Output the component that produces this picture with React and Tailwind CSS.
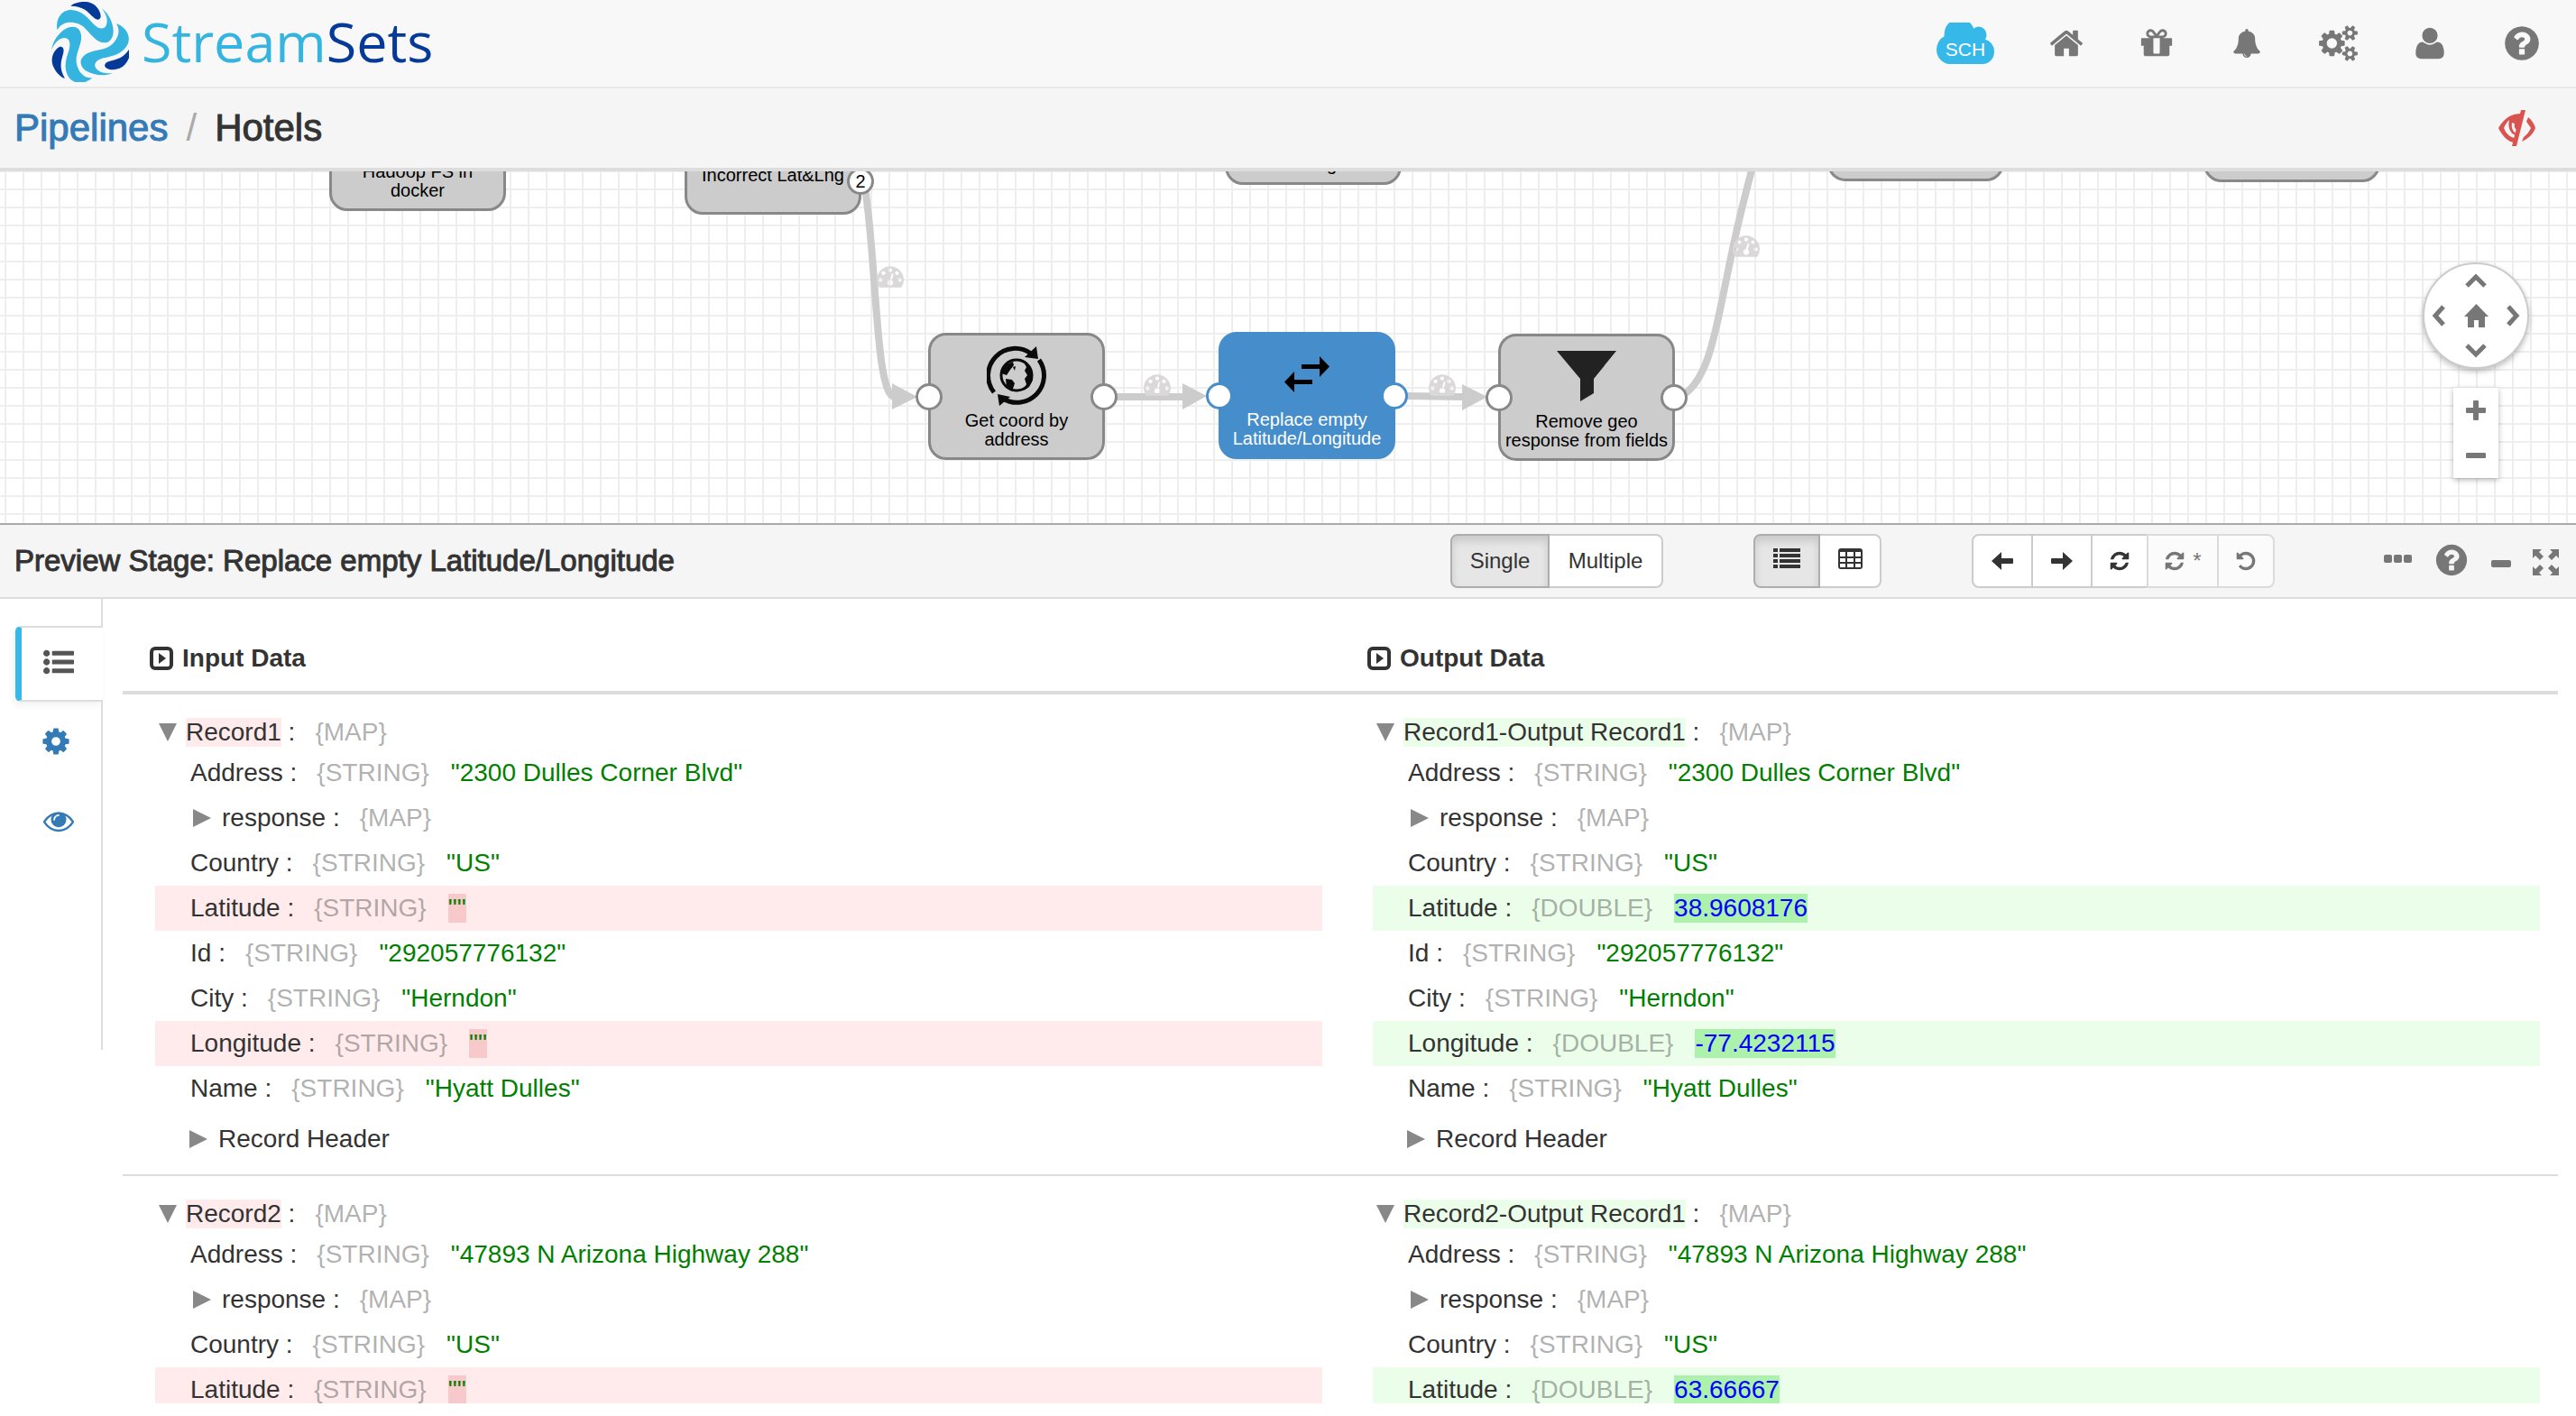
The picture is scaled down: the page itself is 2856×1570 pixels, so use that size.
import React from "react";

const GLYPHS = {
  home: "M1472 992v480q0 26-19 45t-45 19h-384v-384h-256v384h-384q-26 0-45-19t-19-45v-480q0-1 .5-3t.5-3l575-474 575 474q1 2 1 6zm223-69l-62 74q-8 9-21 11h-3q-13 0-21-7l-692-577-692 577q-12 8-24 7-13-2-21-11l-62-74q-8-10-7-23.5t11-21.5l719-599q32-26 76-26t76 26l244 204v-195q0-14 9-23t23-9h192q14 0 23 9t9 23v408l219 182q10 8 11 21.5t-7 23.5z",
  gift: "M1056 1356v-716h-320v716q0 25 18 38.5t46 13.5h192q28 0 46-13.5t18-38.5zm-456-844h195l-126-161q-26-31-69-31-40 0-68 28t-28 68 28 68 68 28zm688-96q0-40-28-68t-68-28q-43 0-69 31l-125 161h194q40 0 68-28t28-68zm376 256v320q0 14-9 23t-23 9h-96v416q0 40-28 68t-68 28h-1088q-40 0-68-28t-28-68v-416h-96q-14 0-23-9t-9-23v-320q0-14 9-23t23-9h440q-93 0-158.5-65.5t-65.5-158.5 65.5-158.5 158.5-65.5q107 0 168 77l128 165 128-165q61-77 168-77 93 0 158.5 65.5t65.5 158.5-65.5 158.5-158.5 65.5h440q14 0 23 9t9 23z",
  bell: "M912 1696q0-16-16-16-59 0-101.5-42.5t-42.5-101.5q0-16-16-16t-16 16q0 73 51.5 124.5t124.5 51.5q16 0 16-16zm816-288q0 52-38 90t-90 38h-448q0 106-75 181t-181 75-181-75-75-181h-448q-52 0-90-38t-38-90q50-42 91-88t85-119.5 74.5-158.5 50-206 19.5-260q0-152 117-282.5t307-158.5q-8-19-8-39 0-40 28-68t68-28 68 28 28 68q0 20-8 39 190 28 307 158.5t117 282.5q0 139 19.5 260t50 206 74.5 158.5 85 119.5 91 88z",
  cogs: "M832 896q0-106-75-181t-181-75-181 75-75 181 75 181 181 75 181-75 75-181zm768 512q0-52-38-90t-90-38-90 38-38 90q0 53 37.5 90.5t90.5 37.5 90.5-37.5 37.5-90.5zm0-1024q0-52-38-90t-90-38-90 38-38 90q0 53 37.5 90.5t90.5 37.5 90.5-37.5 37.5-90.5zm-384 421v185q0 10-7 19.5t-16 10.5l-155 24q-11 35-32 76 34 48 90 115 7 11 7 20 0 12-7 19-23 30-82.5 89.5t-78.5 59.5q-11 0-21-7l-115-90q-37 19-77 31-11 108-23 155-7 24-30 24h-186q-11 0-20-7.5t-10-17.5l-23-153q-34-10-75-31l-118 89q-7 7-20 7-11 0-21-8-144-133-144-160 0-9 7-19 10-14 41-53t47-61q-23-44-35-82l-152-24q-10-1-17-9.5t-7-19.5v-185q0-10 7-19.5t16-10.5l155-24q11-35 32-76-34-48-90-115-7-11-7-20 0-12 7-20 22-30 82-89t79-59q11 0 21 7l115 90q34-18 77-32 11-108 23-154 7-24 30-24h186q11 0 20 7.5t10 17.5l23 153q34 10 75 31l118-89q8-7 20-7 11 0 21 8 144 133 144 160 0 8-7 19-12 16-42 54t-45 60q23 48 34 82l152 23q10 2 17 10.5t7 19.5zm640 533v140q0 16-149 31-12 27-30 52 51 113 51 138 0 4-4 7-122 71-124 71-8 0-46-47t-52-68q-20 2-30 2t-30-2q-14 21-52 68t-46 47q-2 0-124-71-4-3-4-7 0-25 51-138-18-25-30-52-149-15-149-31v-140q0-16 149-31 13-29 30-52-51-113-51-138 0-4 4-7 4-2 35-20t59-34 30-16q8 0 46 46.5t52 67.5q20-2 30-2t30 2q51-71 92-112l6-2q4 0 124 70 4 3 4 7 0 25-51 138 17 23 30 52 149 15 149 31zm0-1024v140q0 16-149 31-12 27-30 52 51 113 51 138 0 4-4 7-122 71-124 71-8 0-46-47t-52-68q-20 2-30 2t-30-2q-14 21-52 68t-46 47q-2 0-124-71-4-3-4-7 0-25 51-138-18-25-30-52-149-15-149-31v-140q0-16 149-31 13-29 30-52-51-113-51-138 0-4 4-7 4-2 35-20t59-34 30-16q8 0 46 46.5t52 67.5q20-2 30-2t30 2q51-71 92-112l6-2q4 0 124 70 4 3 4 7 0 25-51 138 17 23 30 52 149 15 149 31z",
  user: "M1600 1405q0 120-73 189.5t-194 69.5h-874q-121 0-194-69.5t-73-189.5q0-53 3.5-103.5t14-109 26.5-108.5 43-97.5 62-81 85.5-53.5 111.5-20q9 0 42 21.5t74.5 48 108 48 133.5 21.5 133.5-21.5 108-48 74.5-48 42-21.5q61 0 111.5 20t85.5 53.5 62 81 43 97.5 26.5 108.5 14 109 3.5 103.5zm-320-893q0 159-112.5 271.5t-271.5 112.5-271.5-112.5-112.5-271.5 112.5-271.5 271.5-112.5 271.5 112.5 112.5 271.5z",
  question: "M1024 1376v-192q0-14-9-23t-23-9h-192q-14 0-23 9t-9 23v192q0 14 9 23t23 9h192q14 0 23-9t9-23zm256-672q0-88-55.5-163t-138.5-116-170-41q-243 0-371 213-15 24 8 42l132 100q7 6 19 6 16 0 25-12 53-68 86-92 34-24 86-24 48 0 85.5 26t37.5 59q0 38-20 61t-68 45q-63 28-115.5 86.5t-52.5 125.5v36q0 14 9 23t23 9h192q14 0 23-9t9-23q0-19 21.5-49.5t54.5-49.5q32-18 49-28.5t46-35 44.5-48 28-60.5 12.5-81zm384 192q0 209-103 385.5t-279.5 279.5-385.5 103-385.5-103-279.5-279.5-103-385.5 103-385.5 279.5-279.5 385.5-103 385.5 103 279.5 279.5 103 385.5z",
  eye: "M1664 960q-152-236-381-353 61 104 61 225 0 185-131.5 316.5t-316.5 131.5-316.5-131.5-131.5-316.5q0-121 61-225-229 117-381 353 133 205 333.5 326.5t434.5 121.5 434.5-121.5 333.5-326.5zm-720-384q0-20-14-34t-34-14q-125 0-214.5 89.5t-89.5 214.5q0 20 14 34t34 14 34-14 14-34q0-86 61-147t147-61q20 0 34-14t14-34zm848 384q0 34-20 69-140 230-376.5 368.5t-499.5 138.5-499.5-139-376.5-368q-20-35-20-69t20-69q140-229 376.5-368t499.5-139 499.5 139 376.5 368q20 35 20 69z",
  cog: "M1152 896q0-106-75-181t-181-75-181 75-75 181 75 181 181 75 181-75 75-181zm512-109v222q0 12-8 23t-20 13l-185 28q-19 54-39 91 35 50 107 138 10 12 10 25t-9 23q-27 37-99 108t-94 71q-12 0-26-9l-138-108q-44 23-91 38-16 136-29 186-7 28-36 28h-222q-14 0-24.5-8.5t-11.5-21.5l-28-184q-49-16-90-37l-141 107q-10 9-25 9-14 0-25-11-126-114-165-168-7-10-7-23 0-12 8-23 15-21 51-66.5t54-70.5q-27-50-41-99l-183-27q-13-2-21-12.5t-8-23.5v-222q0-12 8-23t19-13l186-28q14-46 39-92-40-57-107-138-10-12-10-24 0-10 9-23 26-36 98.5-107.5t94.5-71.5q13 0 26 10l138 107q44-23 91-38 16-136 29-186 7-28 36-28h222q14 0 24.5 8.5t11.5 21.5l28 184q49 16 90 37l142-107q9-9 24-9 13 0 25 10 129 119 165 170 7 8 7 22 0 12-8 23-15 21-51 66.5t-54 70.5q26 50 41 98l183 28q13 2 21 12.5t8 23.5z",
  list: "M384 1408q0 80-56 136t-136 56-136-56-56-136 56-136 136-56 136 56 56 136zm0-512q0 80-56 136t-136 56-136-56-56-136 56-136 136-56 136 56 56 136zm1408 416v192q0 13-9.5 22.5t-22.5 9.5h-1216q-13 0-22.5-9.5t-9.5-22.5v-192q0-13 9.5-22.5t22.5-9.5h1216q13 0 22.5 9.5t9.5 22.5zm-1408-928q0 80-56 136t-136 56-136-56-56-136 56-136 136-56 136 56 56 136zm1408 416v192q0 13-9.5 22.5t-22.5 9.5h-1216q-13 0-22.5-9.5t-9.5-22.5v-192q0-13 9.5-22.5t22.5-9.5h1216q13 0 22.5 9.5t9.5 22.5zm0-512v192q0 13-9.5 22.5t-22.5 9.5h-1216q-13 0-22.5-9.5t-9.5-22.5v-192q0-13 9.5-22.5t22.5-9.5h1216q13 0 22.5 9.5t9.5 22.5z",
  gauge: "M384 1152q0-53-37.5-90.5t-90.5-37.5-90.5 37.5-37.5 90.5 37.5 90.5 90.5 37.5 90.5-37.5 37.5-90.5zm192-448q0-53-37.5-90.5t-90.5-37.5-90.5 37.5-37.5 90.5 37.5 90.5 90.5 37.5 90.5-37.5 37.5-90.5zm428 481l101-382q6-26-7.5-48.5t-38.5-29.5-48 6.5-30 39.5l-101 382q-60 5-107 43.5t-63 98.5q-20 77 20 146t117 89 146-20 89-117q16-60-6-117t-72-91zm660-33q0-53-37.5-90.5t-90.5-37.5-90.5 37.5-37.5 90.5 37.5 90.5 90.5 37.5 90.5-37.5 37.5-90.5zm-640-640q0-53-37.5-90.5t-90.5-37.5-90.5 37.5-37.5 90.5 37.5 90.5 90.5 37.5 90.5-37.5 37.5-90.5zm448 192q0-53-37.5-90.5t-90.5-37.5-90.5 37.5-37.5 90.5 37.5 90.5 90.5 37.5 90.5-37.5 37.5-90.5zm320 448q0 261-141 483-19 29-54 29h-1402q-35 0-54-29-141-221-141-483 0-182 71-348t191-286 286-191 348-71 348 71 286 191 191 286 71 348z",
  refresh: "M1639 1056q0 5-1 7-64 268-268 434.5t-478 166.5q-146 0-282.5-55t-243.5-157l-129 129q-19 19-45 19t-45-19-19-45v-448q0-26 19-45t45-19h448q26 0 45 19t19 45-19 45l-137 137q71 66 161 102t187 36q134 0 250-65t186-179q11-17 53-117 8-23 30-23h192q13 0 22.5 9.5t9.5 22.5zm25-800v448q0 26-19 45t-45 19h-448q-26 0-45-19t-19-45 19-45l138-138q-148-137-349-137-134 0-250 65t-186 179q-11 17-53 117-8 23-30 23h-199q-13 0-22.5-9.5t-9.5-22.5v-7q65-268 270-434.5t480-166.5q146 0 284 55.5t245 156.5l130-129q19-19 45-19t45 19 19 45z",
  undo: "M1664 896q0 156-61 298t-164 245-245 164-298 61q-172 0-327-72.5t-264-204.5q-7-10-6.5-22.5t8.5-20.5l137-138q10-9 25-9 16 2 23 12 73 95 179 147t225 52q104 0 198.5-40.5t163.5-109.5 109.5-163.5 40.5-198.5-40.5-198.5-109.5-163.5-163.5-109.5-198.5-40.5q-98 0-188 35.5t-160 101.5l137 138q31 30 14 69-17 40-59 40h-448q-26 0-45-19t-19-45v-448q0-42 40-59 39-17 69 14l130 129q107-101 244.5-156.5t284.5-55.5q156 0 298 61t245 164 164 245 61 298z",
};

function Glyph({ name, className, box = "0 0 1792 1792" }) {
  return (
    <svg viewBox={box} className={className} fill="currentColor" aria-hidden="true">
      <path d={GLYPHS[name]} />
    </svg>
  );
}

function Logo() {
  const blade =
    "M78 100C70 60 95 33 122 33C158 33 180 60 198 80C215 97 232 100 240 85C248 68 240 45 225 28C250 45 264 80 264 104C264 128 250 142 236 142C206 142 190 112 168 92C145 70 95 65 78 100Z";
  const drop = "M122 20C135 8 160 4 180 7C205 12 222 35 222 55C221 68 208 68 198 58C180 40 165 20 122 20Z";
  return (
    <a href="#home" aria-label="StreamSets" className="flex items-center gap-[14px] pb-1">
      <svg viewBox="46 3 270 270" className="size-[90px]" aria-hidden="true">
        {[0, 120, 240].map((angle) => (
          <g key={angle} transform={`rotate(${angle} 182 146)`}>
            <path d={blade} fill="#36b4e0" />
            <path d={drop} fill="#063a99" />
          </g>
        ))}
      </svg>
      <span className="font-['Open_Sans',sans-serif] text-[61px] leading-[88px]">
        <span className="text-[#36b4e0]">Stream</span>
        <span className="text-[#063a99]">Sets</span>
      </span>
    </a>
  );
}

function TopBar() {
  const item = "flex w-10 justify-center";
  return (
    <header className="flex h-[98px] shrink-0 items-center justify-between border-b-2 border-[#e7e7e7] bg-[#f8f8f8] pr-[38px] pl-[53px]">
      <Logo />
      <nav className="flex items-center gap-[60px] text-[#777]">
        <button className="relative" aria-label="SCH">
          <svg viewBox="64 256 1920 1280" preserveAspectRatio="none" className="h-[46px] w-[64px]" fill="#36b8e8" aria-hidden="true">
            <path d="M1984 1152q0 159-112.5 271.5t-271.5 112.5h-1088q-185 0-316.5-131.5t-131.5-316.5q0-132 71-241.5t187-163.5q-2-28-2-43 0-212 150-362t362-150q158 0 286.5 88t187.5 230q70-62 166-62 106 0 181 75t75 181q0 75-41 138 129 30 213 134.5t84 239.5z" />
          </svg>
          <span className="absolute inset-x-0 bottom-[5px] text-center text-[21px] leading-[22px] text-white">SCH</span>
        </button>
        <button className={item} aria-label="Home"><Glyph name="home" className="size-10" /></button>
        <button className={item} aria-label="What's new"><Glyph name="gift" className="size-10" /></button>
        <button className={item} aria-label="Alerts"><Glyph name="bell" className="size-8" /></button>
        <button aria-label="Administration"><Glyph name="cogs" box="-64 0 1920 1792" className="h-10 w-[43px]" /></button>
        <button className={item} aria-label="Account"><Glyph name="user" className="size-10" /></button>
        <button aria-label="Help"><Glyph name="question" className="size-11" /></button>
      </nav>
    </header>
  );
}

function ClosedEyeIcon() {
  return (
    <svg viewBox="0 0 41 40" className="h-10 w-[41px]" fill="currentColor" aria-hidden="true">
      <path
        fillRule="evenodd"
        d="M0 20C7 8 15 4 25 4L17 36C10 35 4 28 0 20ZM6 20C8 25 12 30 18 31L19 28C13 26 10 19 12 11C10 13 8 15 6 20ZM15 14C14 20 16 24 20 26L21 22C18 21 17 18 18 15Z"
      />
      <path d="M25 0H30L20 40H15Z" />
      <path d="M33 8C37 11 40 16 41 20C38 27 34 31 26 35L28 30C32 27 34 24 36 20C34 17 32 14 31 13Z" />
    </svg>
  );
}

function Breadcrumb() {
  return (
    <div className="flex h-[92px] shrink-0 items-center justify-between border-b-4 border-[#ddd] bg-[#f5f5f5] pr-[45px] pl-4">
      <div className="flex gap-5 text-[42px] leading-[44px]">
        <a href="#pipelines" className="text-[#337ab7] [-webkit-text-stroke:1px]">Pipelines</a>
        <span className="text-[#aaa]">/</span>
        <span className="text-[#333] [-webkit-text-stroke:1px]">Hotels</span>
      </div>
      <button aria-label="Stop preview" className="text-[#d9534f]"><ClosedEyeIcon /></button>
    </div>
  );
}

function GlobeIcon() {
  return (
    <svg viewBox="0 0 66 67" className="h-[67px] w-[66px]" aria-hidden="true">
      <g fill="none" stroke="#0a0a0a" strokeWidth="5">
        <path d="M8 52A30 30 0 0 1 49 9" />
        <path d="M58 16A30 30 0 0 1 18 59" />
        <circle cx="33" cy="33" r="17" strokeWidth="3" />
      </g>
      <path d="M55 1L57 15L42 13Z M12 54L14 67L26 57Z" fill="#0a0a0a" />
      <path d="M20 22L29 18L30 22L26 27L22 33L16 31Z M29 24L32 23L31 28Z M21 37L28 38L31 42L28 51L22 47Z M40 17L47 22L51 30L51 38L47 46L41 50L44 43L42 37L45 33L42 28L44 24Z" fill="#0a0a0a" />
    </svg>
  );
}

function SwapIcon() {
  return (
    <svg viewBox="0 0 50 40" className="h-10 w-[50px]" fill="#000" aria-hidden="true">
      <path d="M19 9H39V0L50 11.500L39 23V14H19Z M31 26H11V17L0 28.500L11 40V31H31Z" />
    </svg>
  );
}

function FunnelIcon() {
  return (
    <svg viewBox="0 0 66 56" className="h-14 w-[66px]" fill="#222" aria-hidden="true">
      <path d="M0 0H66L41 31V47L26 56V31Z" />
    </svg>
  );
}

/* Positions are on the free pipeline canvas. */
const STAGES = [
  { id: "hadoop", x: 365, y: -97, lines: ["Hadoop FS in", "docker"] },
  { id: "incorrect", x: 759, y: -93, lines: ["Incorrect Lat&Lng"] },
  { id: "latlng", x: 1358, y: -126, lines: ["\u00a0", "& Lng"] },
  { id: "branch", x: 2026, y: -130, lines: [] },
  { id: "target", x: 2443, y: -129, lines: [] },
  { id: "coord", x: 1029, y: 179, lines: ["Get coord by", "address"], icon: <GlobeIcon />, ports: true },
  { id: "replace", x: 1351, y: 178, lines: ["Replace empty", "Latitude/Longitude"], icon: <SwapIcon />, ports: true, selected: true },
  { id: "remove", x: 1661, y: 180, lines: ["Remove geo", "response from fields"], icon: <FunnelIcon />, ports: true },
];

const GAUGES = [
  { x: 972, y: 101 },
  { x: 1268, y: 221 },
  { x: 1584, y: 221 },
  { x: 1921, y: 67 },
];

function Stage({ stage }) {
  const tone = stage.selected
    ? "border-[#468dcb] bg-[#468dcb] text-white"
    : "border-[#888] bg-[#ccc] text-black";
  const port = stage.selected ? "border-[#468dcb]" : "border-[#888]";
  return (
    <div
      style={{ left: stage.x, top: stage.y }}
      className={`absolute h-[141px] w-[196px] rounded-[20px] border-[3px] text-center text-[20px] leading-[21px] ${tone}`}
    >
      <div className="flex h-[84px] items-center justify-center pt-1">{stage.icon}</div>
      {stage.lines.map((line) => (
        <div key={line} className="whitespace-nowrap">{line}</div>
      ))}
      {stage.ports && (
        <>
          <span className={`absolute top-[53px] -left-[17px] size-[30px] rounded-full border-[3px] bg-white ${port}`} />
          <span className={`absolute top-[53px] -right-[17px] size-[30px] rounded-full border-[3px] bg-white ${port}`} />
        </>
      )}
      {stage.id === "incorrect" && (
        <span className="absolute top-[86px] -right-[17px] flex size-[30px] items-center justify-center rounded-full border-[3px] border-[#888] bg-white">2</span>
      )}
    </div>
  );
}

function Chevron({ d, label }) {
  return (
    <button aria-label={label} className="flex items-center justify-center">
      <svg viewBox="0 0 24 24" className="size-6" fill="none" stroke="#777" strokeWidth="5" aria-hidden="true">
        <path d={d} />
      </svg>
    </button>
  );
}

function CanvasControls() {
  return (
    <div className="absolute top-[101px] right-[52px] flex flex-col items-center gap-[21px]">
      <div className="grid size-[118px] grid-cols-[36px_1fr_36px] grid-rows-3 rounded-full border-2 border-[#ccc] bg-white shadow-[0_3px_6px_rgba(0,0,0,0.25)]">
        <span />
        <Chevron label="Pan up" d="M2 17L12 7L22 17" />
        <span />
        <Chevron label="Pan left" d="M15 2L6 12L15 22" />
        <button aria-label="Pan home" className="flex items-center justify-center">
          <svg viewBox="0 0 27 26" className="h-[26px] w-[27px]" fill="#777" aria-hidden="true">
            <path d="M13.500 0L27 14H23V26H16V18H11V26H4V14H0Z" />
          </svg>
        </button>
        <Chevron label="Pan right" d="M9 2L18 12L9 22" />
        <span />
        <Chevron label="Pan down" d="M2 7L12 17L22 7" />
        <span />
      </div>
      <div className="flex h-[100px] w-[50px] flex-col bg-white shadow-[0_2px_6px_rgba(0,0,0,0.3)]">
        <button aria-label="Zoom in" className="flex flex-1 items-center justify-center">
          <svg viewBox="0 0 22 22" className="size-[22px]" fill="#777" aria-hidden="true">
            <path d="M9 0h4a1 1 0 0 1 1 1v7h7a1 1 0 0 1 1 1v4a1 1 0 0 1-1 1h-7v7a1 1 0 0 1-1 1h-4a1 1 0 0 1-1-1v-7h-7a1 1 0 0 1-1-1v-4a1 1 0 0 1 1-1h7v-7a1 1 0 0 1 1-1z" />
          </svg>
        </button>
        <button aria-label="Zoom out" className="flex flex-1 items-center justify-center">
          <span className="h-[6px] w-[22px] rounded-[1px] bg-[#777]" />
        </button>
      </div>
    </div>
  );
}

function Canvas() {
  return (
    <section
      aria-label="Pipeline canvas"
      className="relative h-[390px] shrink-0 overflow-hidden bg-white bg-[linear-gradient(#eee_2px,transparent_2px),linear-gradient(90deg,#eee_2px,transparent_2px)] bg-[size:20px_20px] bg-[position:5px_19px]"
    >
      <svg className="absolute inset-0 size-full" fill="none" stroke="#ccc" strokeWidth="8" aria-hidden="true">
        <path d="M958 12C972 90 970 250 992 250" />
        <path d="M1238 250H1312" />
        <path d="M1560 249L1622 250" />
        <path d="M1862 250C1895 235 1903 170 1914 120C1925 65 1930 45 1943 -5" />
        <path d="M989 235V264L1017 250Z M1311 235V264L1338 249Z M1621 236V265L1649 250Z" fill="#ccc" stroke="none" />
      </svg>
      {GAUGES.map((g) => (
        <span key={g.x} style={{ left: g.x, top: g.y }} className="absolute text-[#dad8d8]">
          <Glyph name="gauge" className="size-[30px]" />
        </span>
      ))}
      {STAGES.map((stage) => (
        <Stage key={stage.id} stage={stage} />
      ))}
      <CanvasControls />
    </section>
  );
}

function ArrowIcon({ flip }) {
  return (
    <svg viewBox="0 0 24 20" className={flip ? "h-5 w-6 rotate-180" : "h-5 w-6"} fill="#333" aria-hidden="true">
      <path d="M0 10L11 0V7H23a1 1 0 0 1 1 1V12a1 1 0 0 1-1 1H11V20Z" />
    </svg>
  );
}

function PreviewBar() {
  const btn = "-ml-[2px] flex h-[60px] items-center justify-center border-2 border-[#ccc] bg-white text-[24px] text-[#333]";
  const active = "relative flex h-[60px] items-center justify-center rounded-l-[8px] border-2 border-[#adadad] bg-[#e6e6e6] text-[24px] text-[#333] shadow-[inset_0_6px_10px_rgba(0,0,0,0.125)]";
  const off = "-ml-[2px] flex h-[60px] items-center justify-center border-2 border-[#dbdbdb] bg-[#fbfbfb] text-[24px] text-[#777]";
  return (
    <div className="flex h-[84px] shrink-0 items-center border-t-2 border-b-2 border-t-[#aaa] border-b-[#ddd] bg-[#f5f5f5] pr-[19px] pl-4">
      <h2 className="mr-auto text-[33px] leading-10 text-[#333] [-webkit-text-stroke:1px]">
        Preview Stage: Replace empty Latitude/Longitude
      </h2>
      <div className="flex items-center gap-[100px]">
        <div className="flex">
          <button className={`${active} w-[110px]`}>Single</button>
          <button className={`${btn} w-[128px] rounded-r-[8px]`}>Multiple</button>
        </div>
        <div className="flex">
          <button aria-label="List view" className={`${active} w-[74px] pb-[6px]`}>
            <svg viewBox="0 0 30 23" className="h-[23px] w-[30px]" fill="currentColor" aria-hidden="true">
              <path d="M0 0H5V4H0ZM7 0H30V4H7ZM0 6H5V10H0ZM7 6H30V10H7ZM0 12H5V16H0ZM7 12H30V16H7ZM0 18H5V22H0ZM7 18H30V22H7Z" />
            </svg>
          </button>
          <button aria-label="Table view" className={`${btn} w-[70px] rounded-r-[8px] pb-[6px]`}>
            <svg viewBox="0 0 27 23" className="h-[23px] w-[27px]" fill="currentColor" fillRule="evenodd" aria-hidden="true">
              <path d="M3 0H24a3 3 0 0 1 3 3V20a3 3 0 0 1-3 3H3a3 3 0 0 1-3-3V3a3 3 0 0 1 3-3ZM2 4V9H8V4ZM10 4V9H17V4ZM19 4V9H25V4ZM2 11V15H8V11ZM10 11V15H17V11ZM19 11V15H25V11ZM2 17V21H8V17ZM10 17V21H17V17ZM19 17V21H25V17Z" />
            </svg>
          </button>
        </div>
        <div className="flex pl-[2px]">
          <button aria-label="Previous stage" className={`${btn} w-[68px] rounded-l-[8px]`}><ArrowIcon /></button>
          <button aria-label="Next stage" className={`${btn} w-[68px]`}><ArrowIcon flip /></button>
          <button aria-label="Refresh preview" className={`${btn} w-[64px]`}><Glyph name="refresh" className="size-6" /></button>
          <button aria-label="Run with changes" disabled className={`${off} w-[80px] gap-2`}>
            <Glyph name="refresh" className="size-6" />
            <span className="leading-6">*</span>
          </button>
          <button aria-label="Revert changes" disabled className={`${off} w-[64px] rounded-r-[8px]`}><Glyph name="undo" className="size-6" /></button>
        </div>
      </div>
      <div className="ml-[121px] flex items-center gap-6 pb-[2px] text-[#777]">
        <button aria-label="More" className="flex gap-[2px] pb-1">
          <span className="h-[9px] w-[9px] rounded-[2px] bg-[#777]" />
          <span className="h-[9px] w-[9px] rounded-[2px] bg-[#777]" />
          <span className="h-[9px] w-[9px] rounded-[2px] bg-[#777]" />
        </button>
        <button aria-label="Help"><Glyph name="question" className="size-10" /></button>
        <button aria-label="Minimize" className="flex h-6 w-[22px] items-center pt-2">
          <span className="h-2 w-[22px] rounded-[2px] bg-[#777]" />
        </button>
        <button aria-label="Maximize" className="pt-1">
          <svg viewBox="0 0 29 29" className="size-[29px]" fill="#777" aria-hidden="true">
            {[0, 90, 180, 270].map((angle) => (
              <path key={angle} transform={`rotate(${angle} 14.5 14.5)`} d="M0 0H10L7 3L12 8L8 12L3 7L0 10Z" />
            ))}
          </svg>
        </button>
      </div>
    </div>
  );
}

function SideTabs() {
  return (
    <nav aria-label="Preview panels" className="flex h-[500px] w-[114px] shrink-0 flex-col pl-[17px] text-[#337ab7]">
      <div className="h-[30px] border-r-2 border-[#ddd]" />
      <button aria-label="Records" className="flex h-[84px] items-center rounded-l-[6px] border-y-2 border-l-[7px] border-y-[#ddd] border-l-[#36b8e8] bg-white pb-1 pl-6 text-[#555] shadow-[-2px_4px_8px_rgba(0,0,0,0.06)]">
        <Glyph name="list" className="size-[34px]" />
      </button>
      <div className="flex flex-1 flex-col border-r-2 border-[#ddd]">
        <button aria-label="Configuration" className="flex h-[88px] items-center pl-[28px]"><Glyph name="cog" className="size-[34px]" /></button>
        <button aria-label="Watch" className="flex h-[88px] items-center pl-[31px]"><Glyph name="eye" className="size-[34px]" /></button>
      </div>
    </nav>
  );
}

const HEADINGS = ["Input Data", "Output Data"];

const RECORDS = [
  {
    n: 1,
    before: [
      ["Address", "STRING", '"2300 Dulles Corner Blvd"'],
      ["response", "MAP"],
      ["Country", "STRING", '"US"'],
      ["Latitude", "STRING", '""', "removed"],
      ["Id", "STRING", '"292057776132"'],
      ["City", "STRING", '"Herndon"'],
      ["Longitude", "STRING", '""', "removed"],
      ["Name", "STRING", '"Hyatt Dulles"'],
    ],
    after: [
      ["Address", "STRING", '"2300 Dulles Corner Blvd"'],
      ["response", "MAP"],
      ["Country", "STRING", '"US"'],
      ["Latitude", "DOUBLE", "38.9608176", "added"],
      ["Id", "STRING", '"292057776132"'],
      ["City", "STRING", '"Herndon"'],
      ["Longitude", "DOUBLE", "-77.4232115", "added"],
      ["Name", "STRING", '"Hyatt Dulles"'],
    ],
    header: true,
  },
  {
    n: 2,
    before: [
      ["Address", "STRING", '"47893 N Arizona Highway 288"'],
      ["response", "MAP"],
      ["Country", "STRING", '"US"'],
      ["Latitude", "STRING", '""', "removed"],
    ],
    after: [
      ["Address", "STRING", '"47893 N Arizona Highway 288"'],
      ["response", "MAP"],
      ["Country", "STRING", '"US"'],
      ["Latitude", "DOUBLE", "63.66667", "added"],
    ],
  },
];

function Caret({ open }) {
  return (
    <svg viewBox="0 0 20 20" className={open ? "size-5 rotate-90" : "size-5"} fill="#888" aria-hidden="true">
      <path d="M0 0L20 10L0 20Z" />
    </svg>
  );
}

function Type({ children }) {
  return <span className="ml-[22px] text-[#333]/40">{`{${children}}`}</span>;
}

const ROW_TONE = { removed: "bg-[#ffebeb]", added: "bg-[#eafeea]" };
const VALUE_TONE = {
  removed: "bg-[#f8c9cb] text-[#008000]",
  added: "bg-[#acf2ac] text-[#0000ff]",
};

function Field({ field }) {
  const [name, type, value, change] = field;
  if (value === undefined) {
    return (
      <li className="flex h-[50px] items-center pl-[42px]">
        <button className="flex items-center gap-3"><Caret /> {name} :</button>
        <Type>{type}</Type>
      </li>
    );
  }
  return (
    <li className={`flex h-[50px] items-center pl-[39px] ${change ? ROW_TONE[change] : ""}`}>
      <span>{name} :</span>
      <Type>{type}</Type>
      <span className={`ml-6 ${change ? VALUE_TONE[change] : "text-[#008000]"}`}>{value}</span>
    </li>
  );
}

function RecordTree({ title, tone, fields, header }) {
  return (
    <div className="pr-5 pl-9">
      <div className="flex items-center pl-1">
        <button aria-label={`Collapse ${title}`} className="mr-[10px]"><Caret open /></button>
        <span className={tone}>{title}</span>
        <span className="whitespace-pre"> :</span>
        <Type>MAP</Type>
      </div>
      <ul className="mt-1">
        {fields.map((field) => (
          <Field key={field[0]} field={field} />
        ))}
      </ul>
      {header && (
        <button className="mt-[6px] flex h-[50px] items-center gap-3 pl-[38px]"><Caret /> Record Header</button>
      )}
    </div>
  );
}

function PreviewData() {
  return (
    <div className="min-w-0 flex-1 pr-5 pl-[22px] text-[28px] leading-8 text-[#333]">
      <div className="grid h-[106px] grid-cols-2 items-center border-b-4 border-[#ddd] pt-[42px] pb-3">
        {HEADINGS.map((heading) => (
          <h3 key={heading} className="flex items-center gap-[10px] pl-[30px] font-bold">
            <svg viewBox="0 0 26 26" className="size-[26px]" aria-hidden="true">
              <rect x="2" y="2" width="22" height="22" rx="4" fill="none" stroke="#333" strokeWidth="4" />
              <path d="M10 7L18 13L10 19Z" fill="#333" />
            </svg>
            {heading}
          </h3>
        ))}
      </div>
      {RECORDS.map((record) => (
        <div key={record.n} className="grid grid-cols-2 border-b-2 border-[#ddd] pt-[26px] pb-[14px]">
          <RecordTree title={`Record${record.n}`} tone="bg-[#ffebeb]" fields={record.before} header={record.header} />
          <RecordTree title={`Record${record.n}-Output Record1`} tone="bg-[#eafeea]" fields={record.after} header={record.header} />
        </div>
      ))}
    </div>
  );
}

export default function App() {
  return (
    <div className="flex h-screen flex-col overflow-hidden bg-white pb-[14px] font-['Liberation_Sans',Arial,sans-serif]">
      <TopBar />
      <Breadcrumb />
      <Canvas />
      <PreviewBar />
      <main className="flex min-h-0 flex-1 overflow-hidden">
        <SideTabs />
        <PreviewData />
      </main>
    </div>
  );
}
